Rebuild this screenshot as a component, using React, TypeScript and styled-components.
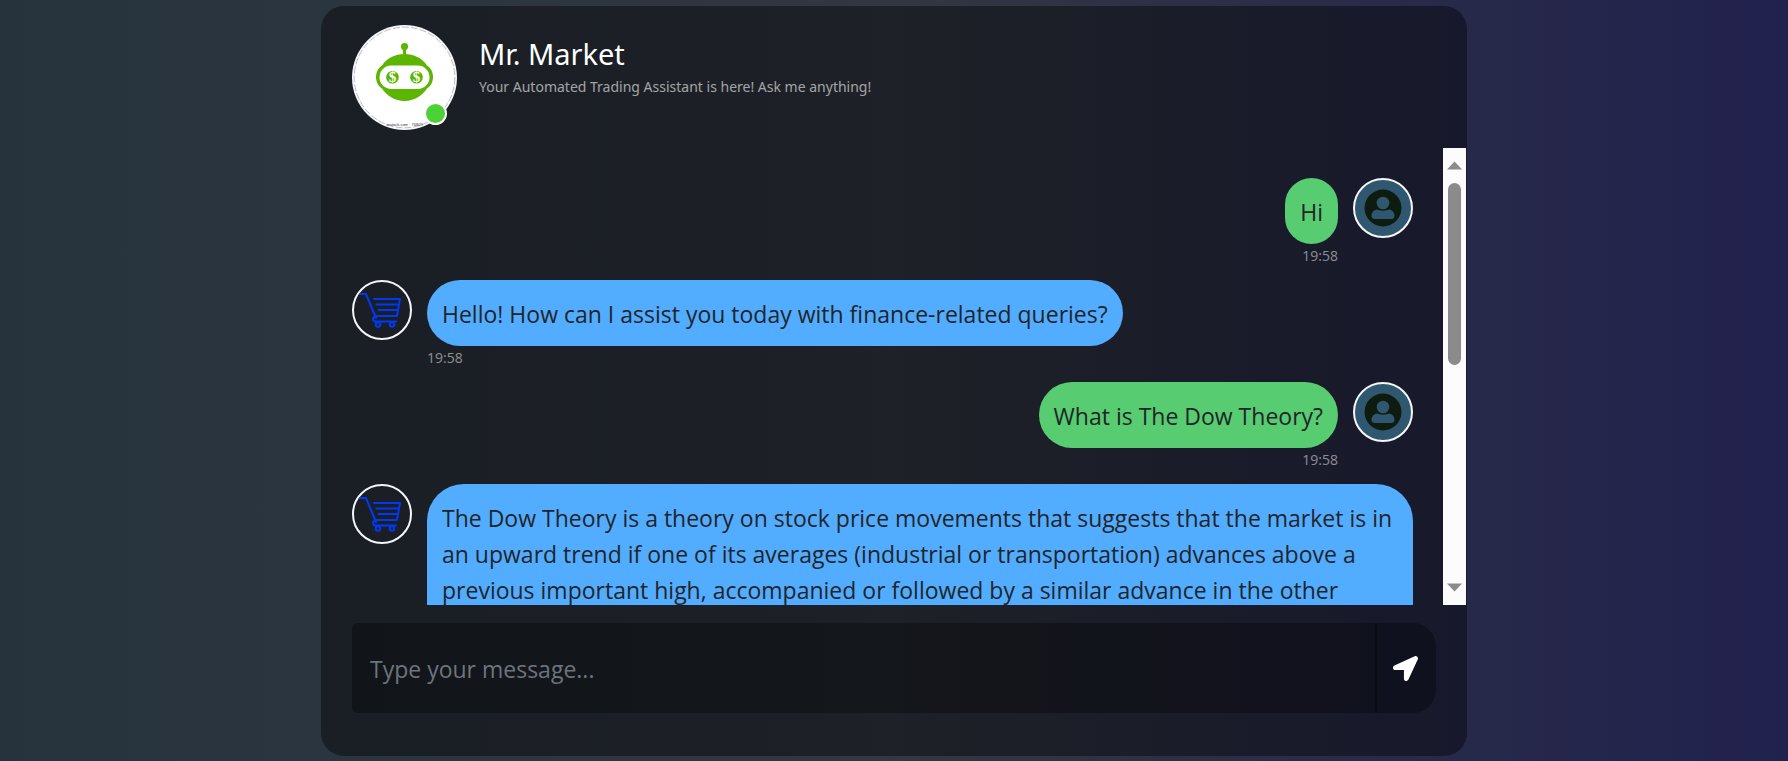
import React, { useRef } from "react";
import styled, { createGlobalStyle } from "styled-components";
import { FaLocationArrow } from "react-icons/fa";

const GlobalStyle = createGlobalStyle`
  *, *::before, *::after { box-sizing: border-box; }
  body {
    margin: 0;
    font-family: "Open Sans", "Noto Sans", sans-serif;
    color: #212529;
  }
`;

const Page = styled.main`
  display: flex;
  justify-content: center;
  height: 100vh;
  min-height: 480px;
  padding: 6px 0 5px;
  background: linear-gradient(to right, rgb(38, 51, 61), rgb(50, 55, 65), rgb(33, 33, 78));
`;

const Column = styled.div`
  display: flex;
  width: 66.6667%;
  padding: 0 23px;

  @media (max-width: 900px) {
    width: 100%;
  }
`;

const Card = styled.section`
  display: flex;
  flex-direction: column;
  width: 100%;
  padding: 0 1px;
  border-radius: 23px;
  background: rgba(0, 0, 0, 0.4);
  overflow: hidden;
`;

const Header = styled.header`
  display: flex;
  gap: 22px;
  padding: 19px 30px 18px;
  font-family: "Noto Sans", "Open Sans", sans-serif;
`;

const BotPortrait = styled.div`
  position: relative;
  flex: none;
  width: 105px;
  height: 105px;
`;

const OnlineDot = styled.span`
  position: absolute;
  right: 10px;
  bottom: 5px;
  width: 23px;
  height: 23px;
  border: 2px solid #fff;
  border-radius: 50%;
  background: #4cd137;
`;

const Intro = styled.div`
  padding-top: 7px;
`;

const Title = styled.h1`
  margin: 0;
  font-size: 29px;
  font-weight: 400;
  line-height: 44px;
  color: #fff;
`;

const Tagline = styled.p`
  margin: 0;
  font-size: 14px;
  line-height: 22px;
  color: rgba(255, 255, 255, 0.6);
`;

const Conversation = styled.div`
  display: flex;
  flex: 1;
  min-height: 0;
`;

const MessageList = styled.div`
  flex: 1;
  min-width: 0;
  padding: 30px;
  overflow-y: auto;
  scrollbar-width: none;
`;

const Message = styled.article<{ $mine: boolean }>`
  display: flex;
  flex-direction: ${(p) => (p.$mine ? "row-reverse" : "row")};
  align-items: flex-start;
  gap: 15px;
  margin-bottom: 6px;
`;

const Avatar = styled.div<{ $fill: string }>`
  flex: none;
  width: 60px;
  height: 60px;
  border: 2px solid #f5f6fa;
  border-radius: 50%;
  background: ${(p) => p.$fill};
  overflow: hidden;

  svg {
    display: block;
  }
`;

const MessageBody = styled.div<{ $mine: boolean }>`
  display: flex;
  flex-direction: column;
  align-items: ${(p) => (p.$mine ? "flex-end" : "flex-start")};
  min-width: 0;
`;

const Bubble = styled.p<{ $mine: boolean }>`
  margin: 0;
  padding: 16px 15px 14px;
  border-radius: 37px;
  background: ${(p) => (p.$mine ? "#58cc71" : "#52acff")};
  font-size: 23px;
  line-height: 36px;
`;

const Time = styled.time`
  font-size: 14px;
  line-height: 24px;
  height: 30px;
  color: rgba(255, 255, 255, 0.5);
`;

const ScrollTrack = styled.div`
  display: flex;
  flex: none;
  flex-direction: column;
  align-items: center;
  justify-content: space-between;
  width: 23px;
  padding: 13px 0;
  background: #fcfcfc;
`;

const ScrollButton = styled.button`
  display: block;
  width: 15px;
  height: 9px;
  padding: 0;
  border: 0;
  background: none;
  color: #8b8b8b;

  svg {
    display: block;
  }
`;

const ThumbLane = styled.div`
  flex: 1;
  padding: 13px 0;
`;

const Thumb = styled.div`
  width: 13px;
  height: 47%;
  border-radius: 7px;
  background: #8b8b8b;
`;

const Footer = styled.form`
  display: flex;
  padding: 18px 30px 43px;
`;

const MessageInput = styled.input`
  flex: 1;
  min-width: 0;
  height: 90px;
  padding: 2px 18px 0;
  border: 0;
  border-radius: 6px 0 0 6px;
  outline: 0;
  background: rgba(0, 0, 0, 0.3);
  font: inherit;
  font-size: 23px;
  color: #fff;

  &::placeholder {
    color: #6c757d;
    opacity: 1;
  }
`;

/* Overlaps the input by 2px; the doubled tint forms the divider. */
const SendButton = styled.button`
  display: flex;
  align-items: center;
  justify-content: center;
  width: 61px;
  height: 90px;
  margin-left: -2px;
  padding: 0;
  border: 0;
  border-radius: 0 23px 23px 0;
  background: rgba(0, 0, 0, 0.3);
  color: #fff;
  cursor: pointer;
`;

const RobotFace = () => (
  <svg width="105" height="105" viewBox="0 0 105 105" role="img" aria-label="Mr. Market">
    <circle cx="52.5" cy="52.5" r="52.5" fill="#f5f6fa" />
    <circle cx="52.5" cy="52.5" r="51" fill="#fff" />
    <circle cx="52.5" cy="52.5" r="50.3" fill="none" stroke="#9a9fae" strokeWidth="0.7" strokeDasharray="7 2" />
    <circle cx="52.5" cy="21.6" r="3.6" fill="#5cb500" />
    <path d="M51 23h3v7h-3z" fill="#5cb500" />
    <path
      d="M52.5 29C62 29 70 33 75 40.5C79 43 81 47.5 81 52C81 56.5 79 61 75 63.5C70 71 62 76 52.5 76C43 76 35 71 30 63.5C26 61 24 56.5 24 52C24 47.5 26 43 30 40.5C35 33 43 29 52.5 29Z"
      fill="#5cb500"
    />
    <rect x="27.5" y="40.5" width="50" height="23.5" rx="11.7" fill="#fff" />
    <circle cx="40.5" cy="52.3" r="6.3" fill="#5cb500" />
    <circle cx="64.5" cy="52.3" r="6.3" fill="#5cb500" />
    <g fill="#fff" fontFamily="Liberation Serif, serif" fontWeight="700" fontSize="15" textAnchor="middle">
      <text x="40.5" y="57">$</text>
      <text x="64.5" y="57">$</text>
    </g>
    <text x="52.5" y="101" fontFamily="Liberation Sans, sans-serif" fontSize="4" textAnchor="middle" fill="#333">
      erstock.com · 76809
    </text>
  </svg>
);

const CartIcon = () => (
  <svg width="56" height="56" viewBox="0 0 56 56" fill="none" stroke="#0038f5" strokeWidth="2" strokeLinecap="round" strokeLinejoin="round" aria-hidden="true">
    <path d="M4 12H12L22 36" />
    <path d="M20 17H46L43 34H22C18 35 18 39 22 39.5H42" />
    <path d="M22.5 22.5H44.5M24.5 28H43.5" />
    <circle cx="24" cy="42.5" r="2.3" />
    <circle cx="38" cy="42.5" r="2.3" />
  </svg>
);

const PersonIcon = () => (
  <svg width="56" height="56" viewBox="0 0 56 56" aria-hidden="true">
    <circle cx="28" cy="28" r="18.5" fill="#0e1c10" />
    <circle cx="28" cy="23" r="6.3" fill="#2f5870" />
    <path d="M22 29.5C24 31 32 31 34 29.5C37 30 39.5 32.5 39.5 35.5C39.5 38 38.5 39 36 39H20C17.5 39 16.5 38 16.5 35.5C16.5 32.5 19 30 22 29.5Z" fill="#2f5870" />
  </svg>
);

const Arrow = ({ up }: { up?: boolean }) => (
  <svg width="15" height="9" viewBox="0 0 15 9" fill="currentColor" aria-hidden="true">
    <path d={up ? "M0 8.5L7.5 0.5L15 8.5Z" : "M0 0.5H15L7.5 8.5Z"} />
  </svg>
);

type Entry = { mine: boolean; text: string; time: string };

const entries: Entry[] = [
  { mine: true, text: "Hi", time: "19:58" },
  { mine: false, text: "Hello! How can I assist you today with finance-related queries?", time: "19:58" },
  { mine: true, text: "What is The Dow Theory?", time: "19:58" },
  {
    mine: false,
    text: "The Dow Theory is a theory on stock price movements that suggests that the market is in an upward trend if one of its averages (industrial or transportation) advances above a previous important high, accompanied or followed by a similar advance in the other average.",
    time: "19:58",
  },
];

export default function App() {
  const list = useRef<HTMLDivElement>(null);
  const scroll = (top: number) => list.current?.scrollBy({ top, behavior: "smooth" });

  return (
    <>
      <GlobalStyle />
      <Page>
        <Column>
          <Card>
            <Header>
              <BotPortrait>
                <RobotFace />
                <OnlineDot />
              </BotPortrait>
              <Intro>
                <Title>Mr. Market</Title>
                <Tagline>Your Automated Trading Assistant is here! Ask me anything!</Tagline>
              </Intro>
            </Header>
            <Conversation>
              <MessageList ref={list}>
                {entries.map((entry, i) => (
                  <Message key={i} $mine={entry.mine}>
                    <Avatar $fill={entry.mine ? "#2f5870" : "transparent"}>
                      {entry.mine ? <PersonIcon /> : <CartIcon />}
                    </Avatar>
                    <MessageBody $mine={entry.mine}>
                      <Bubble $mine={entry.mine}>{entry.text}</Bubble>
                      <Time>{entry.time}</Time>
                    </MessageBody>
                  </Message>
                ))}
              </MessageList>
              <ScrollTrack>
                <ScrollButton type="button" aria-label="Scroll up" onClick={() => scroll(-80)}>
                  <Arrow up />
                </ScrollButton>
                <ThumbLane>
                  <Thumb />
                </ThumbLane>
                <ScrollButton type="button" aria-label="Scroll down" onClick={() => scroll(80)}>
                  <Arrow />
                </ScrollButton>
              </ScrollTrack>
            </Conversation>
            <Footer onSubmit={(e) => e.preventDefault()}>
              <MessageInput type="text" placeholder="Type your message..." aria-label="Message" />
              <SendButton type="submit" aria-label="Send">
                <FaLocationArrow size={25} />
              </SendButton>
            </Footer>
          </Card>
        </Column>
      </Page>
    </>
  );
}
